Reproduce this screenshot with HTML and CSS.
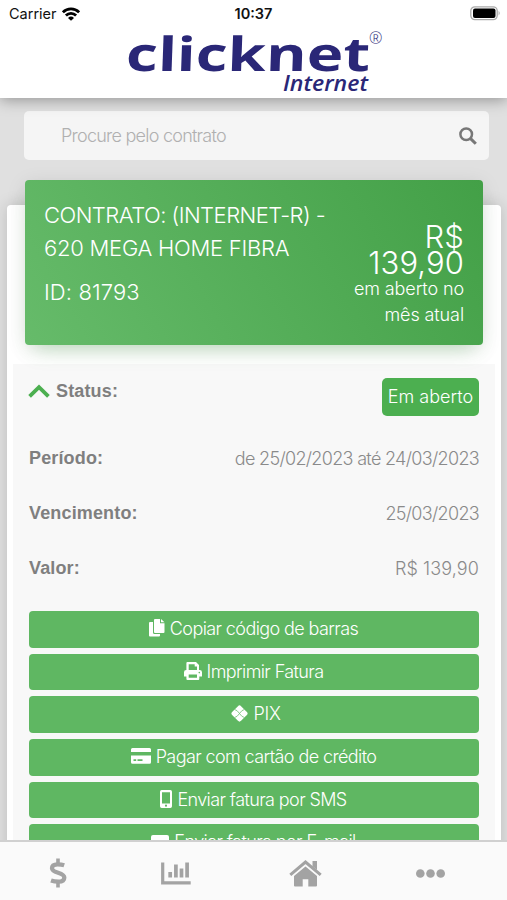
FILE: index.html
```html
<!DOCTYPE html>
<html lang="pt-BR">
<head>
    <meta charset="UTF-8">
    <meta name="viewport" content="width=device-width, initial-scale=1.0">
    <title>Clicknet Internet</title>
    <link rel="stylesheet" href="styles.css">
</head>
<body>
    <header class="header">
        <div class="statusbar">
            <div class="carrier">
                <span>Carrier</span>
                <svg width="18" height="14" viewBox="0 0 18 14" fill="none" stroke="#000" stroke-width="2.8">
                    <path d="M.9 5.3a11.5 11.5 0 0 1 16.2 0"/>
                    <path d="M3.9 8.5a7.2 7.2 0 0 1 10.2 0"/>
                    <path d="M9 13.8 6 10.9a4.3 4.3 0 0 1 6 0z" fill="#000" stroke="none"/>
                </svg>
            </div>
            <div class="clock">10:37</div>
            <svg class="battery" width="31" height="15" viewBox="0 0 31 15">
                <rect x=".8" y=".8" width="26.4" height="12.8" rx="4" fill="#fff" stroke="#aaa" stroke-width="1.3"/>
                <rect x="3" y="2.6" width="22.5" height="9.4" rx="2"/>
                <path d="M28.6 4.8q2.2 2.4 0 4.8z" fill="#aaa"/>
            </svg>
        </div>
        <svg class="logo" width="258" height="62" viewBox="0 0 258 62">
            <g transform="skewX(-2)" class="logo-name">
                <text x="2" y="39.5" textLength="244" lengthAdjust="spacingAndGlyphs">clicknet</text>
            </g>
            <text class="logo-sub" x="158" y="59.5" textLength="85" lengthAdjust="spacingAndGlyphs">Internet</text>
            <text class="logo-reg" x="244" y="13" textLength="13" lengthAdjust="spacingAndGlyphs">®</text>
        </svg>
    </header>

    <main class="content">
        <div class="search">
            <input type="text" placeholder="Procure pelo contrato">
            <svg width="18" height="18" viewBox="0 0 18 18" fill="none" stroke="#777">
                <circle cx="7.2" cy="7.2" r="5.8" stroke-width="2.5"/>
                <path d="M11.6 11.6l5.2 5.2" stroke-width="3"/>
            </svg>
        </div>

        <div class="card">
            <div class="card-header">
                <div class="contract">
                    <p class="contract-type">CONTRATO: (INTERNET-R) -</p>
                    <p class="contract-plan">620 MEGA HOME FIBRA</p>
                    <p class="contract-id">ID: 81793</p>
                </div>
                <div class="total">
                    <p class="total-value">R$<br>139,90</p>
                    <p class="total-text">em aberto no<br>mês atual</p>
                </div>
            </div>

            <div class="invoice">
                <div class="row status">
                    <div class="status-label">
                        <svg width="22" height="14" viewBox="0 0 22 14" fill="none" stroke="#4caf50" stroke-width="3.8">
                            <path d="M1.6 12.4 11 3.2l9.4 9.2"/>
                        </svg>
                        <b>Status:</b>
                    </div>
                    <span class="badge">Em aberto</span>
                </div>
                <div class="row"><b>Período:</b><span class="date">de 25/02/2023 até 24/03/2023</span></div>
                <div class="row"><b>Vencimento:</b><span class="date">25/03/2023</span></div>
                <div class="row"><b>Valor:</b><span class="value">R$ 139,90</span></div>

                <div class="buttons">
                    <button class="btn">
                        <svg width="16" height="18" viewBox="0 0 16 18" fill="#fff">
                            <path d="M6 0h5v4.2h4.5V13a1 1 0 0 1-1 1H6a1 1 0 0 1-1-1V1a1 1 0 0 1 1-1z"/>
                            <path d="M12 0l3.5 3.3H12z"/>
                            <path d="M1 3h3v10.500q0 1.500 1.500 1.500H11v1.500a1 1 0 0 1-1 1H1a1 1 0 0 1-1-1V4a1 1 0 0 1 1-1z"/>
                        </svg>
                        <span>Copiar código de barras</span>
                    </button>
                    <button class="btn">
                        <svg width="18" height="18" viewBox="0 0 18 18" fill="#fff">
                            <path fill-rule="evenodd" d="M3.400 0H12l3 3v5h.7A2.300 2.300 0 0 1 18 10.300V14.500h-2.700V17a1 1 0 0 1-1 1H3.400a1 1 0 0 1-1-1v-2.500H0v-4.200A2.300 2.300 0 0 1 2.400 8V1a1 1 0 0 1 1-1zM4.700 2.300V8h8.300V4.600h-2.300V2.300zM4.700 12.500v3.200H13v-3.200z"/>
                            <circle cx="15.300" cy="10.600" r=".8" fill="#5fb762"/>
                        </svg>
                        <span>Imprimir Fatura</span>
                    </button>
                    <button class="btn btn-pix">
                        <svg width="17" height="17" viewBox="0 0 17 17">
                            <rect x="2.200" y="2.200" width="12.600" height="12.600" rx="2.200" transform="rotate(45 8.500 8.500)" fill="#fff"/>
                            <path d="M3.800 4.600Q6 4.800 8.500 8.500 11 4.800 13.200 4.600M3.800 12.400Q6 12.200 8.500 8.500 11 12.200 13.200 12.400" fill="none" stroke="#5fb762" stroke-width=".7"/>
                        </svg>
                        <span>PIX</span>
                    </button>
                    <button class="btn">
                        <svg width="20" height="16" viewBox="0 0 20 16" fill="#fff">
                            <path d="M1.500 0h17A1.500 1.500 0 0 1 20 1.500V4H0V1.500A1.500 1.500 0 0 1 1.500 0z"/>
                            <path fill-rule="evenodd" d="M0 7.500h20v6.700a1.500 1.500 0 0 1-1.500 1.500h-17A1.500 1.500 0 0 1 0 14.200zM2.500 11.300v1.600h2.700v-1.600zM6.500 11.300v1.600h5v-1.600z"/>
                        </svg>
                        <span>Pagar com cartão de crédito</span>
                    </button>
                    <button class="btn">
                        <svg width="12" height="18" viewBox="0 0 12 18" fill="#fff">
                            <path fill-rule="evenodd" d="M1.700 0h8.600A1.700 1.700 0 0 1 12 1.700v14.600a1.700 1.700 0 0 1-1.700 1.700H1.700A1.700 1.700 0 0 1 0 16.300V1.700A1.700 1.700 0 0 1 1.700 0zM2 2.200v11.300h8V2.200z"/>
                            <circle cx="6" cy="15.700" r="1.100" fill="#5fb762"/>
                        </svg>
                        <span>Enviar fatura por SMS</span>
                    </button>
                    <button class="btn">
                        <svg width="18" height="14" viewBox="0 0 18 14" fill="#fff"><rect width="18" height="14" rx="2"/></svg>
                        <span>Enviar fatura por E-mail</span>
                    </button>
                </div>
            </div>
        </div>
    </main>

    <nav class="tabs">
        <a class="tab">
            <svg width="18" height="30" viewBox="0 0 18 30" fill="none" stroke="#a3a3a3" stroke-width="4.300">
                <path d="M9 .5v5M9 24.500v5" stroke-width="3.600"/>
                <path d="M15.200 7.200Q12.500 6.300 8.500 6.300C4.500 6.300 3 8 3 10.200c0 5.400 12.300 3.700 12.300 9.300C15.300 22.300 13 23.700 9.500 23.700Q5.500 23.700 2 22.500"/>
            </svg>
        </a>
        <a class="tab">
            <svg width="30" height="23" viewBox="0 0 30 23" fill="none" stroke="#a3a3a3">
                <path d="M1.700.5v20.400h28" stroke-width="3.200"/>
                <path d="M9.200 10v5.500M14.900 2.500v13M20.500 6.500v9M26.100.5v15" stroke-width="3.700"/>
            </svg>
        </a>
        <a class="tab tab-home">
            <svg width="33" height="27" viewBox="0 0 33 27" fill="#a3a3a3">
                <path d="M1.300 14.800 16.500 2l15.200 12.800" fill="none" stroke="#a3a3a3" stroke-width="3"/>
                <path d="M23.500 1h4.500v9l-4.500-3.700z"/>
                <path d="M16.500 6.500 28 16v9.500a1 1 0 0 1-1 1h-7.700v-7.200h-5.600v7.200H6a1 1 0 0 1-1-1V16z"/>
            </svg>
        </a>
        <a class="tab">
            <svg width="29" height="9" viewBox="0 0 29 9" fill="#a3a3a3">
                <circle cx="4.300" cy="4.500" r="4.300"/>
                <circle cx="14.500" cy="4.500" r="4.300"/>
                <circle cx="24.700" cy="4.500" r="4.300"/>
            </svg>
        </a>
    </nav>
</body>
</html>
```

FILE: styles.css
```css
* {
    box-sizing: border-box;
}

body {
    margin: 0;
    height: 900px;
    overflow: hidden;
    display: flex;
    flex-direction: column;
    background: #e0e0e0;
    font-family: Inter, "Liberation Sans", sans-serif;
    font-weight: 300;
    font-size: 18px;
    letter-spacing: -0.4px;
    color: #8a8a8a;
}

p {
    margin: 0;
}

.header {
    position: relative;
    flex: none;
    height: 98px;
    background: #fff;
    box-shadow: 0 2px 14px rgba(0, 0, 0, 0.35);
}

.statusbar {
    display: grid;
    grid-template-columns: 1fr auto 1fr;
    align-items: center;
    height: 27px;
    padding: 0 6px 0 9px;
    color: #111;
    font-size: 14.5px;
    font-weight: 400;
    letter-spacing: 0;
}

.carrier {
    display: flex;
    align-items: center;
    gap: 5px;
}

.clock {
    margin-right: 3px;
    font-weight: 600;
}

.battery {
    justify-self: end;
}

.logo {
    display: block;
    margin: 4px 0 0 125px;
    fill: #2a2777;
    overflow: visible;
}

.logo-name {
    font: bold 47px "Open Sans", sans-serif;
    letter-spacing: 0;
}

.logo-sub {
    font: italic 600 21px "Open Sans", sans-serif;
    letter-spacing: 0;
}

.logo-reg {
    font: 300 16px "Open Sans", sans-serif;
}

.content {
    flex: 1;
    min-height: 0;
    overflow: hidden;
    padding: 13px 6px 0 7px;
}

.search {
    display: flex;
    align-items: center;
    height: 49px;
    margin: 0 12px 0 17px;
    padding: 0 12px 0 37px;
    background: #f5f5f5;
    border-radius: 5px;
}

.search input {
    flex: 1;
    border: none;
    background: none;
    padding: 0;
    font: inherit;
    letter-spacing: -0.75px;
}

.search input::placeholder {
    color: #b0b0b0;
}

.card {
    height: 720px;
    margin-top: 45px;
    padding: 0 6px;
    background: #fff;
    border-radius: 4px;
    box-shadow: 0 0 16px rgba(0, 0, 0, 0.16);
}

.card-header {
    position: relative;
    top: -25px;
    display: flex;
    justify-content: space-between;
    height: 165px;
    margin: 0 12px -6px;
    padding: 19px 19px 0;
    background: linear-gradient(60deg, #66bb6a, #43a047);
    border-radius: 4px;
    box-shadow: 0 12px 20px -10px rgba(76, 175, 80, 0.35), 0 4px 20px rgba(0, 0, 0, 0.1);
    color: #fff;
}

.contract {
    font-size: 22px;
    line-height: 33px;
}

.contract-type {
    letter-spacing: -0.52px;
}

.contract-plan {
    letter-spacing: -0.25px;
}

.contract-id {
    margin-top: 11px;
    letter-spacing: 0.1px;
}

.total {
    padding-top: 25px;
    text-align: right;
}

.total-value {
    font-size: 31px;
    line-height: 26px;
    letter-spacing: 0.1px;
}

.total-text {
    line-height: 26px;
    letter-spacing: -0.1px;
}

.invoice {
    padding: 14px 16px 0;
    background: #f8f8f8;
}

.row {
    display: flex;
    justify-content: space-between;
    align-items: center;
    height: 55px;
}

.row b {
    font-family: "Liberation Sans", sans-serif;
    font-weight: bold;
    letter-spacing: 0.15px;
    color: #7f7f7f;
}

.date {
    letter-spacing: -0.68px;
}

.value {
    letter-spacing: 0.1px;
}

.status {
    height: 53px;
    align-items: flex-start;
}

.status-label {
    display: flex;
    align-items: center;
    gap: 6px;
    height: 26px;
    margin-left: -1px;
}

.badge {
    width: 97px;
    height: 38px;
    line-height: 37px;
    text-align: center;
    letter-spacing: 0;
    background: #4caf50;
    border-radius: 5px;
    color: #fff;
}

.buttons {
    display: flex;
    flex-direction: column;
    gap: 6px;
    padding-top: 15px;
}

.btn {
    display: flex;
    align-items: center;
    justify-content: center;
    gap: 5px;
    height: 36.7px;
    padding: 0 1px 2px 0;
    border: none;
    border-radius: 4px;
    background: #5fb762;
    color: #fff;
    font: inherit;
    letter-spacing: -0.6px;
}

.btn-pix {
    padding-left: 5px;
    letter-spacing: -0.3px;
}

.tabs {
    position: relative;
    flex: none;
    display: flex;
    justify-content: space-between;
    height: 60px;
    padding: 4px 62px 0 49px;
    background: #fafafa;
    border-top: 2px solid #d0d0d0;
}

.tab {
    display: flex;
    align-items: center;
}

.tab-home {
    margin-left: 3px;
}
```
